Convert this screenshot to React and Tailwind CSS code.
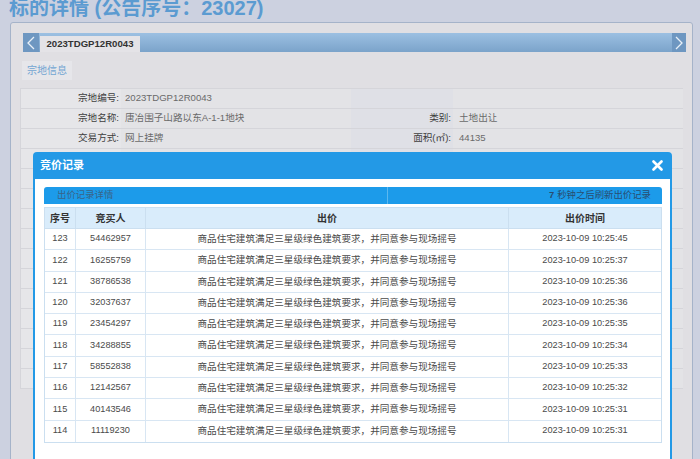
const bids = [
  { no: 123, buyer: "54462957", time: "2023-10-09 10:25:45" },
  { no: 122, buyer: "16255759", time: "2023-10-09 10:25:37" },
  { no: 121, buyer: "38786538", time: "2023-10-09 10:25:36" },
  { no: 120, buyer: "32037637", time: "2023-10-09 10:25:36" },
  { no: 119, buyer: "23454297", time: "2023-10-09 10:25:35" },
  { no: 118, buyer: "34288855", time: "2023-10-09 10:25:34" },
  { no: 117, buyer: "58552838", time: "2023-10-09 10:25:33" },
  { no: 116, buyer: "12142567", time: "2023-10-09 10:25:32" },
  { no: 115, buyer: "40143546", time: "2023-10-09 10:25:31" },
  { no: 114, buyer: "11119230", time: "2023-10-09 10:25:31" },
];

const offer = "商品住宅建筑满足三星级绿色建筑要求，并同意参与现场摇号";

const Chevron = ({ dir }) => (
  <svg width="10" height="14" viewBox="0 0 10 14">
    <polyline
      points={dir === "left" ? "8,1 2,7 8,13" : "2,1 8,7 2,13"}
      fill="none"
      stroke="#e8f0f8"
      strokeWidth="1.3"
    />
  </svg>
);

const InfoRow = ({ label, value, label2, value2 }) => (
  <div className="grid h-[20px] grid-cols-[100px_230px_102px_1fr] border-b border-[#d5d5da] text-[9.6px]">
    <div className="flex items-center justify-end bg-[#e6e6e9] pr-[2px] text-[#3e3e3e]">{label}</div>
    <div className="flex items-center pl-[4px] text-[#6a6a6a]">{value}</div>
    <div className="flex items-center justify-end bg-[#dfe0e6] pr-[2px] text-[#3e3e3e]">{label2}</div>
    <div className="flex items-center pl-[6px] text-[#6a6a6a]">{value2}</div>
  </div>
);

const App = () => {
  return (
    <div className="relative h-[459px] w-[700px] overflow-hidden bg-[#ccd1e0] font-['Liberation_Sans','Noto_Sans_CJK_SC',sans-serif]">
      <h1 className="h-[22px] pl-[9px] text-[20px] font-bold leading-[17px] text-[#5b9bd1]">
        标的详情 (公告序号：23027)
      </h1>

      <div className="ml-[10px] mr-[7px] h-[450px] rounded-t-[3px] border border-[#a5b3c9] bg-[#e0dfe3] pl-[12px] pr-[6px] pt-[10px]">
        {/* tab bar */}
        <div className="flex h-[19px] bg-gradient-to-b from-[#9cc0e2] to-[#7ba3ca]">
          <div className="flex w-[16px] items-center justify-center bg-[#6e97c1]">
            <Chevron dir="left" />
          </div>
          <div className="ml-[1px] mt-[3px] flex w-[100px] items-center justify-center bg-[#e4e3e7] text-[9.6px] font-semibold text-[#333]">
            2023TDGP12R0043
          </div>
          <div className="flex-1" />
          <div className="flex w-[14px] items-center justify-center bg-[#6e97c1]">
            <Chevron dir="right" />
          </div>
        </div>

        {/* section button */}
        <div className="-ml-[1px] mt-[9px] flex h-[19px] w-[50px] items-center justify-center bg-[#e6e6ea] text-[10px] text-[#72a5d2]">
          宗地信息
        </div>

        {/* info table */}
        <div className="-ml-[3px] mr-[3px] mt-[8px] border-t border-l border-[#d5d5da] bg-[#e3e3e6]">
          <InfoRow label="宗地编号:" value="2023TDGP12R0043" label2="" value2="" />
          <InfoRow label="宗地名称:" value="唐冶围子山路以东A-1-1地块" label2="类别:" value2="土地出让" />
          <InfoRow label="交易方式:" value="网上挂牌" label2="面积(㎡):" value2="44135" />
          {Array.from({ length: 12 }).map((_, i) => (
            <InfoRow key={i} label="" value="" label2="" value2="" />
          ))}
        </div>
      </div>

      {/* bid record dialog */}
      <div className="absolute left-[33px] top-[152px] h-[320px] w-[639px] rounded-t-[4px] bg-[#2399e6] px-[2px]">
        <div className="flex h-[27px] items-center justify-between pl-[5px] pr-[7px]">
          <span className="text-[11px] font-bold text-white">竞价记录</span>
          <svg width="11" height="11" viewBox="0 0 11 11">
            <path d="M1.5 1.5 L9.5 9.5 M9.5 1.5 L1.5 9.5" stroke="white" strokeWidth="2.6" strokeLinecap="round" />
          </svg>
        </div>

        <div className="h-[300px] bg-white pl-[9px] pr-[8px] pt-[8px]">
          <div className="flex h-[17px] rounded-t-[3px] bg-[#1c9bea] text-[9.4px]">
            <div className="flex w-[343px] items-center pl-[13px] text-[#3a6488]">出价记录详情</div>
            <div className="flex flex-1 items-center justify-end border-l border-[#5cb8ef] pr-[11px] text-[#294d70]">
              <span className="mr-[3px] font-bold">7</span>秒钟之后刷新出价记录
            </div>
          </div>

          <div className="mt-[3px] border border-[#cbdff0]">
            <div className="grid h-[21px] grid-cols-[30px_70px_363px_1fr] border-b border-[#cbdff0] bg-[#d9ecfb] text-[10px] font-bold text-[#333]">
              <div className="flex items-center justify-center">序号</div>
              <div className="flex items-center justify-center border-l border-[#cbdff0]">竞买人</div>
              <div className="flex items-center justify-center border-l border-[#cbdff0]">出价</div>
              <div className="flex items-center justify-center border-l border-[#cbdff0]">出价时间</div>
            </div>
            {bids.map((b, i) => (
              <div
                key={i}
                className="grid h-[21.3px] grid-cols-[30px_70px_363px_1fr] border-b border-[#d8e6f3] text-[#4a4a4a] last:border-b-0"
              >
                <div className="flex items-center justify-center text-[9.2px]">{b.no}</div>
                <div className="flex items-center justify-center border-l border-[#d8e6f3] text-[9.2px]">{b.buyer}</div>
                <div className="flex items-center justify-center border-l border-[#d8e6f3] text-[9.6px]">{offer}</div>
                <div className="flex items-center justify-center border-l border-[#d8e6f3] text-[9.2px]">{b.time}</div>
              </div>
            ))}
          </div>
        </div>
      </div>
    </div>
  );
};

export default App;
